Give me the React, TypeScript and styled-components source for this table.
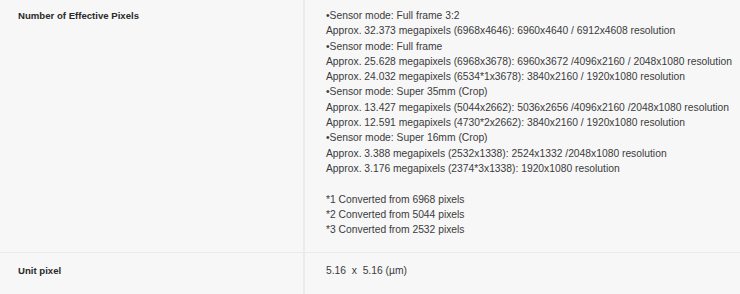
import React from "react";
import styled, { createGlobalStyle } from "styled-components";

const GlobalStyle = createGlobalStyle`
  html, body {
    margin: 0;
    padding: 0;
    background: #f7f7f7;
  }
  body {
    font-family: "Liberation Sans", Arial, sans-serif;
    color: #3b3b3b;
  }
`;

const StyledTable = styled.div`
  display: grid;
  grid-template-columns: 305px 1fr;
  width: 740px;
`;

const StyledLabel = styled.div<{ $last?: boolean }>`
  padding: ${(p) => (p.$last ? "10px" : "8px")} 18px 15px;
  font-size: 9.6px;
  font-weight: 700;
  line-height: 15.3px;
  color: #2a2a2a;
  border-right: 2px solid #ebebeb;
  border-bottom: ${(p) => (p.$last ? "none" : "1px solid #ebebeb")};
`;

const StyledValue = styled.div<{ $last?: boolean }>`
  padding: ${(p) => (p.$last ? "10px" : "8px")} 4px 15px 21px;
  font-size: 10.3px;
  line-height: 15.3px;
  white-space: nowrap;
  border-bottom: ${(p) => (p.$last ? "none" : "1px solid #ebebeb")};
`;

const StyledLine = styled.div``;
const StyledGap = styled.div`
  height: 15.3px;
`;

const pixelLines = [
  "•Sensor mode: Full frame 3:2",
  "Approx. 32.373 megapixels (6968x4646): 6960x4640 / 6912x4608 resolution",
  "•Sensor mode: Full frame",
  "Approx. 25.628 megapixels (6968x3678): 6960x3672 /4096x2160 / 2048x1080 resolution",
  "Approx. 24.032 megapixels (6534*1x3678): 3840x2160 / 1920x1080 resolution",
  "•Sensor mode: Super 35mm (Crop)",
  "Approx. 13.427 megapixels (5044x2662): 5036x2656 /4096x2160 /2048x1080 resolution",
  "Approx. 12.591 megapixels (4730*2x2662): 3840x2160 / 1920x1080 resolution",
  "•Sensor mode: Super 16mm (Crop)",
  "Approx. 3.388 megapixels (2532x1338): 2524x1332 /2048x1080 resolution",
  "Approx. 3.176 megapixels (2374*3x1338): 1920x1080 resolution",
];

const notes = [
  "*1 Converted from 6968 pixels",
  "*2 Converted from 5044 pixels",
  "*3 Converted from 2532 pixels",
];

export default function App() {
  return (
    <>
      <GlobalStyle />
      <StyledTable>
        <StyledLabel>Number of Effective Pixels</StyledLabel>
        <StyledValue>
          {pixelLines.map((line) => (
            <StyledLine key={line}>{line}</StyledLine>
          ))}
          <StyledGap />
          {notes.map((line) => (
            <StyledLine key={line}>{line}</StyledLine>
          ))}
        </StyledValue>
        <StyledLabel $last>Unit pixel</StyledLabel>
        <StyledValue $last>5.16&nbsp;&nbsp;x&nbsp;&nbsp;5.16 (µm)</StyledValue>
      </StyledTable>
    </>
  );
}
